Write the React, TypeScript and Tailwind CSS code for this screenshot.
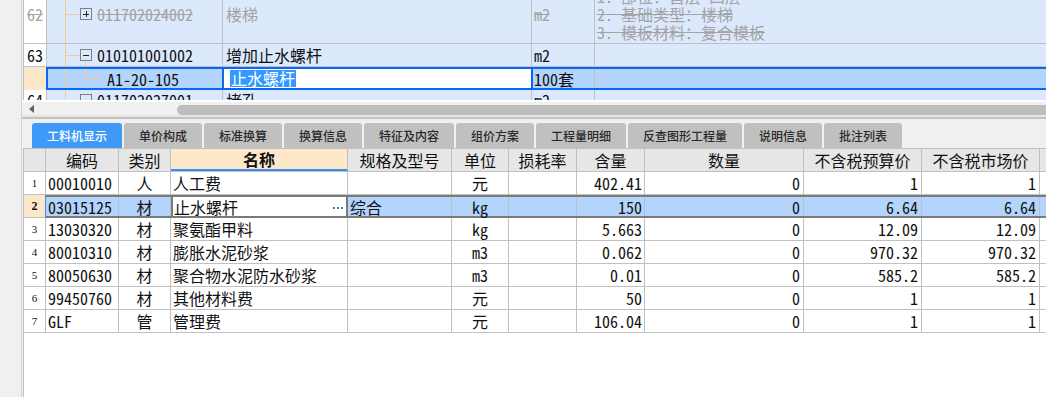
import React from "react";

const F = "font-[family-name:'Noto_Sans_Mono_CJK_SC','Noto_Sans_CJK_SC',monospace]";

type Row = {
  n: string;
  code: string;
  type: string;
  name: string;
  spec: string;
  unit: string;
  qty: string;
  cnt: string;
  bud: string;
  mkt: string;
};

const rows: Row[] = [
  { n: "1", code: "00010010", type: "人", name: "人工费", spec: "", unit: "元", qty: "402.41", cnt: "0", bud: "1", mkt: "1" },
  { n: "2", code: "03015125", type: "材", name: "止水螺杆", spec: "综合", unit: "kg", qty: "150", cnt: "0", bud: "6.64", mkt: "6.64" },
  { n: "3", code: "13030320", type: "材", name: "聚氨酯甲料", spec: "", unit: "kg", qty: "5.663", cnt: "0", bud: "12.09", mkt: "12.09" },
  { n: "4", code: "80010310", type: "材", name: "膨胀水泥砂浆", spec: "", unit: "m3", qty: "0.062", cnt: "0", bud: "970.32", mkt: "970.32" },
  { n: "5", code: "80050630", type: "材", name: "聚合物水泥防水砂浆", spec: "", unit: "m3", qty: "0.01", cnt: "0", bud: "585.2", mkt: "585.2" },
  { n: "6", code: "99450760", type: "材", name: "其他材料费", spec: "", unit: "元", qty: "50", cnt: "0", bud: "1", mkt: "1" },
  { n: "7", code: "GLF", type: "管", name: "管理费", spec: "", unit: "元", qty: "106.04", cnt: "0", bud: "1", mkt: "1" },
];

const tabs: { label: string; w: string }[] = [
  { label: "工料机显示", w: "w-[90px]" },
  { label: "单价构成", w: "w-[78px]" },
  { label: "标准换算", w: "w-[78px]" },
  { label: "换算信息", w: "w-[78px]" },
  { label: "特征及内容", w: "w-[90px]" },
  { label: "组价方案", w: "w-[78px]" },
  { label: "工程量明细", w: "w-[90px]" },
  { label: "反查图形工程量", w: "w-[114px]" },
  { label: "说明信息", w: "w-[78px]" },
  { label: "批注列表", w: "w-[78px]" },
];

function TreeBox({ plus }: { plus?: boolean }) {
  return (
    <div className="relative w-[12px] h-[12px] border border-[#808080] shrink-0">
      <div className="absolute left-[2px] right-[2px] top-[4.5px] h-px bg-[#222]" />
      {plus && <div className="absolute top-[2px] bottom-[2px] left-[4.5px] w-px bg-[#222]" />}
    </div>
  );
}

function VLine() {
  return <div className="absolute left-[18px] top-0 bottom-0 w-px bg-[#f9c994]" />;
}

function TopGrid() {
  return (
    <div className={`h-[100px] overflow-hidden border-l border-[#c0c0c0] bg-[#dce9fc] text-[16px] ${F}`}>
      <div className="-mt-[15px]">
        {/* row 62 */}
        <div className="flex h-[59px] border-b border-[#c0c0c0] text-[#a3a3a3]">
          <div className="w-[23px] shrink-0 bg-white border-r border-[#c0c0c0] flex items-center pl-[3px] line-through">62</div>
          <div className="relative w-[176px] shrink-0 border-r border-[#c0c0c0] flex items-center">
            <VLine />
            <div className="absolute left-[18px] w-[15px] top-1/2 h-px bg-[#f9c994]" />
            <div className="ml-[33px] flex items-center">
              <TreeBox plus />
            </div>
            <span className="ml-[5px] line-through">011702024002</span>
          </div>
          <div className="w-[309px] shrink-0 border-r border-[#c0c0c0] flex items-center pl-[3px]">楼梯</div>
          <div className="w-[63px] shrink-0 border-r border-[#c0c0c0] flex items-center pl-[2px] line-through">m2</div>
          <div className="flex-1 flex flex-col justify-center pl-[2px] leading-[18px] line-through whitespace-nowrap">
            <div>1. 部位：首层~四层</div>
            <div>2. 基础类型：楼梯</div>
            <div>3. 模板材料：复合模板</div>
          </div>
        </div>
        {/* row 63 */}
        <div className="flex h-[23px] border-b border-[#c0c0c0] text-[#111]">
          <div className="w-[23px] shrink-0 bg-white border-r border-[#c0c0c0] flex items-center pl-[3px]">63</div>
          <div className="relative w-[176px] shrink-0 border-r border-[#c0c0c0] flex items-center">
            <VLine />
            <div className="absolute left-[18px] w-[15px] top-1/2 h-px bg-[#f9c994]" />
            <div className="absolute left-[38px] top-[17px] bottom-0 w-px bg-[#f9c994]" />
            <div className="ml-[33px] flex items-center">
              <TreeBox />
            </div>
            <span className="ml-[5px]">010101001002</span>
          </div>
          <div className="w-[309px] shrink-0 border-r border-[#c0c0c0] flex items-center pl-[3px]">增加止水螺杆</div>
          <div className="w-[63px] shrink-0 border-r border-[#c0c0c0] flex items-center pl-[2px]">m2</div>
          <div className="flex-1" />
        </div>
        {/* selected row */}
        <div className="flex h-[23px] text-[#111]">
          <div className="w-[22px] shrink-0 bg-[#fde7c9]" />
          <div className="flex-1 flex border-y-2 border-l-2 border-[#0a66f5] bg-[#b3d4fc]">
            <div className="relative w-[174px] shrink-0 flex items-center">
              <div className="absolute left-[16px] top-0 bottom-0 w-px bg-[#f9c994]" />
              <div className="absolute left-[36px] top-0 h-[9px] w-px bg-[#f9c994]" />
              <div className="absolute left-[36px] top-[9px] w-[16px] h-px bg-[#f9c994]" />
              <span className="ml-[59px]">A1-20-105</span>
            </div>
            <div className="w-[311px] shrink-0 border-x-2 border-[#0a66f5] bg-white flex items-center pl-[6px]">
              <span className="bg-[#3399ff] text-white px-[1px] leading-[17px]">止水螺杆</span>
            </div>
            <div className="w-[62px] shrink-0 border-r border-[#c0c0c0] flex items-center pl-[1px]">100套</div>
            <div className="flex-1" />
          </div>
        </div>
        {/* row 64 */}
        <div className="flex h-[23px] text-[#111] leading-[20px]">
          <div className="w-[23px] shrink-0 bg-white border-r border-[#c0c0c0] flex items-start pl-[3px]">64</div>
          <div className="relative w-[176px] shrink-0 border-r border-[#c0c0c0] flex items-start">
            <VLine />
            <div className="absolute left-[18px] w-[15px] top-[10px] h-px bg-[#f9c994]" />
            <div className="ml-[33px] mt-[4px] flex items-center">
              <TreeBox />
            </div>
            <span className="ml-[5px]">011702027001</span>
          </div>
          <div className="w-[309px] shrink-0 border-r border-[#c0c0c0] flex items-start pl-[3px]">堵孔</div>
          <div className="w-[63px] shrink-0 border-r border-[#c0c0c0] flex items-start pl-[2px]">m2</div>
          <div className="flex-1" />
        </div>
      </div>
    </div>
  );
}

function ScrollBar() {
  return (
    <div className="h-[13px] bg-[#f0f0f0] flex items-center">
      <div className="w-[155px] shrink-0 flex items-center pl-[7px]">
        <svg width="5" height="8" viewBox="0 0 5 8">
          <path d="M5 0 L0 4 L5 8 Z" fill="#606060" />
        </svg>
      </div>
      <div className="flex-1 h-[10px] mt-[2px] bg-[#bdbdbd] rounded-l-[5px]" />
    </div>
  );
}

function Tabs() {
  return (
    <div className="h-[25px] flex gap-[2px] pl-[10px] bg-[#f0f0f0] font-[family-name:'Noto_Sans_CJK_SC',sans-serif] text-[12px] font-medium">
      {tabs.map((t, i) => (
        <div
          key={t.label}
          className={`${t.w} shrink-0 flex items-center justify-center rounded-t-[3px] ${
            i === 0 ? "bg-[#3f9af7] text-white" : "bg-[#c0c0c0] text-[#2a2a2a]"
          }`}
        >
          {t.label}
        </div>
      ))}
    </div>
  );
}

const C = {
  n: "w-[22px]",
  code: "w-[73px]",
  type: "w-[52px]",
  name: "w-[177px]",
  spec: "w-[104px]",
  unit: "w-[57px]",
  loss: "w-[68px]",
  qty: "w-[68px]",
  cnt: "w-[159px]",
  bud: "w-[118px]",
  mkt: "w-[118px]",
};

const cell = "shrink-0 border-r border-[#c0c0c0] flex items-center h-full";

function Dots() {
  return (
    <div className="flex gap-[2px] items-center mr-[3px] mt-[2px]">
      <div className="w-[2px] h-[2px] bg-[#3a78d8]" />
      <div className="w-[2px] h-[2px] bg-[#3a78d8]" />
      <div className="w-[2px] h-[2px] bg-[#3a78d8]" />
    </div>
  );
}

function LowerGrid() {
  return (
    <div className={`flex-1 bg-white border-l border-t border-[#c0c0c0] text-[16px] text-[#111] ${F}`}>
      {/* header */}
      <div className="flex h-[23px] border-b border-[#c0c0c0] bg-[#e6e6e6]">
        <div className={`${C.n} ${cell}`} />
        <div className={`${C.code} ${cell} justify-center`}>编码</div>
        <div className={`${C.type} ${cell} justify-center`}>类别</div>
        <div className={`${C.name} ${cell} justify-center bg-[#fde8c9] font-bold border-b-2 border-b-[#3a8ef0]`}>名称</div>
        <div className={`${C.spec} ${cell} justify-center`}>规格及型号</div>
        <div className={`${C.unit} ${cell} justify-center`}>单位</div>
        <div className={`${C.loss} ${cell} justify-center`}>损耗率</div>
        <div className={`${C.qty} ${cell} justify-center`}>含量</div>
        <div className={`${C.cnt} ${cell} justify-center`}>数量</div>
        <div className={`${C.bud} ${cell} justify-center`}>不含税预算价</div>
        <div className={`${C.mkt} ${cell} justify-center`}>不含税市场价</div>
        <div className="flex-1" />
      </div>
      {rows.map((r) => {
        const sel = r.n === "2";
        const content = (
          <>
            <div className={`${C.code} ${cell} pl-[2px]`}>{r.code}</div>
            <div className={`${C.type} ${cell} justify-center`}>{r.type}</div>
            {sel ? (
              <div className={`${C.name} shrink-0 h-full flex items-center bg-white border-x-2 border-[#7a7a7a] pl-[1px] justify-between`}>
                <span>{r.name}</span>
                <Dots />
              </div>
            ) : (
              <div className={`${C.name} ${cell} pl-[2px]`}>{r.name}</div>
            )}
            <div className={`${C.spec} ${cell} pl-[2px]`}>{r.spec}</div>
            <div className={`${C.unit} ${cell} justify-center`}>{r.unit}</div>
            <div className={`${C.loss} ${cell}`} />
            <div className={`${C.qty} ${cell} justify-end pr-[2px]`}>{r.qty}</div>
            <div className={`${C.cnt} ${cell} justify-end pr-[3px]`}>{r.cnt}</div>
            <div className={`${C.bud} ${cell} justify-end pr-[3px]`}>{r.bud}</div>
            <div className={`${C.mkt} ${cell} justify-end pr-[3px]`}>{r.mkt}</div>
            <div className="flex-1" />
          </>
        );
        return (
          <div key={r.n} className={`flex h-[23px] ${sel ? "" : "border-b border-[#c0c0c0]"}`}>
            <div
              className={`${C.n} shrink-0 h-full border-r flex items-center justify-center font-[family-name:'Liberation_Serif',serif] ${
                sel
                  ? "bg-[#fde7c9] font-bold text-[12px] border-[#3a8ef0] border-b border-b-[#c0c0c0]"
                  : "text-[11px] border-[#c0c0c0]"
              }`}
            >
              {r.n}
            </div>
            {sel ? (
              <div className="flex-1 flex h-full border-y-2 border-[#7a7a7a] bg-[#b3d4fc]">{content}</div>
            ) : (
              content
            )}
          </div>
        );
      })}
    </div>
  );
}

export default function App() {
  return (
    <div className="w-[1046px] h-[397px] overflow-hidden flex bg-[#f0f0f0]">
      <div className="w-[22px] shrink-0 h-full bg-[#f0f0f0] border-r border-[#d2d2d2]" />
      <div className="flex-1 flex flex-col min-w-0">
        <div className="pl-[1px]">
          <TopGrid />
        </div>
        <div className="h-[2px] bg-white" />
        <ScrollBar />
        <div className="h-[2px] bg-[#e6e6e6]" />
        <div className="h-[2px] bg-[#c2c2c2]" />
        <div className="h-[4px] bg-[#f0f0f0]" />
        <Tabs />
        <div className="flex-1 flex pl-[1px]">
          <LowerGrid />
        </div>
      </div>
    </div>
  );
}
